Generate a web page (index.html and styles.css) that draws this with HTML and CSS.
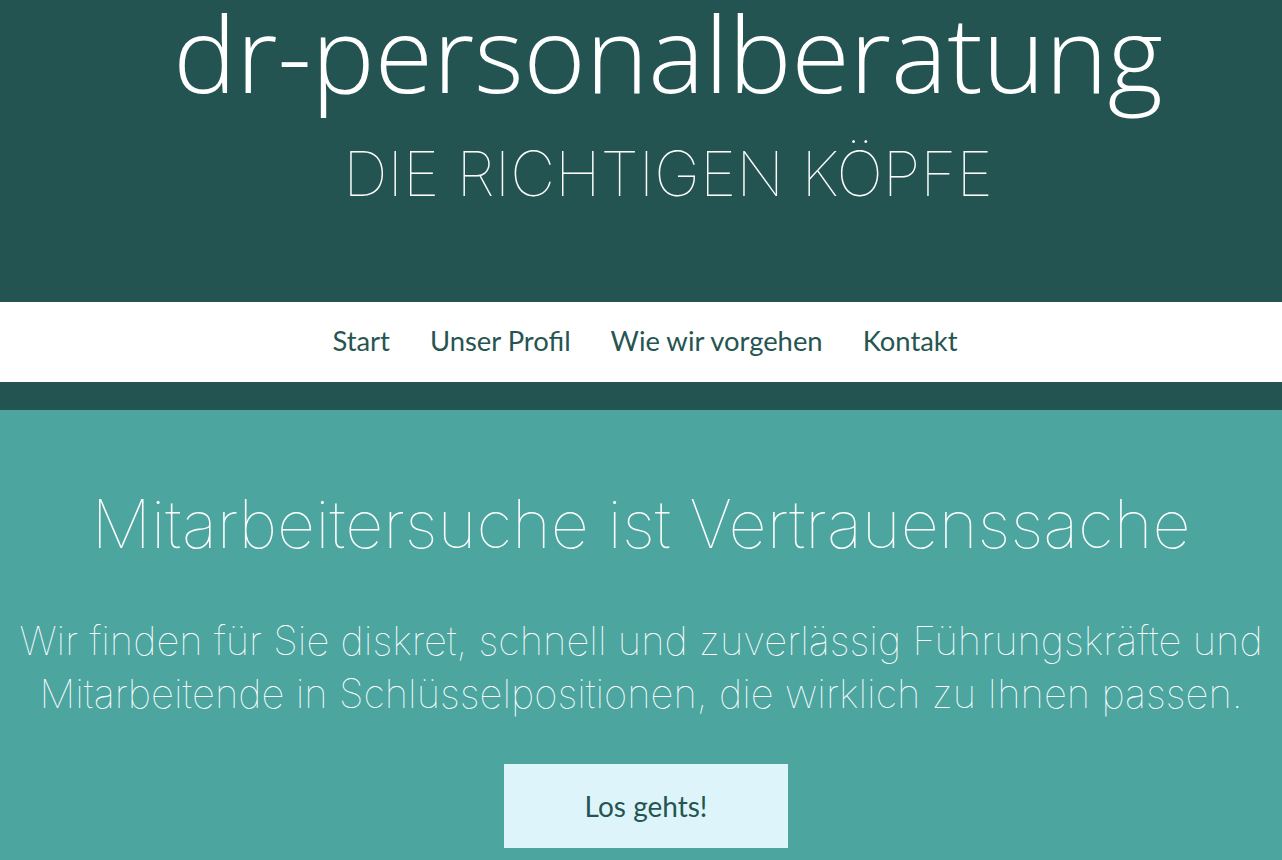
FILE: index.html
```html
<!DOCTYPE html>
<html lang="de">
<head>
<meta charset="utf-8">
<title>dr-personalberatung</title>
<link rel="stylesheet" href="styles.css">
</head>
<body>
<header class="masthead">
  <h1 class="brand">dr-personalberatung</h1>
  <p class="tagline">DIE RICHTIGEN KÖPFE</p>
</header>
<nav class="nav">
  <a href="#">Start</a>
  <a href="#">Unser Profil</a>
  <a href="#">Wie wir vorgehen</a>
  <a href="#">Kontakt</a>
</nav>
<div class="strip"></div>
<section class="hero">
  <h2 class="hero-title">Mitarbeitersuche ist Vertrauenssache</h2>
  <p class="hero-text">Wir finden für Sie diskret, schnell und zuverlässig Führungskräfte und Mitarbeitende in Schlüsselpositionen, die wirklich zu Ihnen passen.</p>
  <a class="cta" href="#">Los gehts!</a>
</section>
</body>
</html>
```
FILE: styles.css
```css
html, body {
  margin: 0;
  padding: 0;
}
body {
  font-family: "Inter", "Open Sans", sans-serif;
  background: #4ca59f;
  overflow: hidden;
  height: 860px;
}
.masthead {
  background: #235451;
  height: 302px;
  display: flex;
  flex-direction: column;
  align-items: center;
  color: #fff;
  padding-left: 54px;
  box-sizing: border-box;
}
.brand {
  margin: 0;
  font-family: "Open Sans", sans-serif;
  font-weight: 300;
  font-size: 106px;
  line-height: 104px;
  letter-spacing: 0;
}
.tagline {
  margin: 32px 0 0 0;
  font-family: "Inter", sans-serif;
  font-weight: 100;
  font-size: 62px;
  line-height: 76px;
}
.nav {
  background: #fff;
  height: 80px;
  display: flex;
  justify-content: center;
  align-items: center;
  gap: 40px;
  padding-left: 8px;
  padding-bottom: 4px;
  box-sizing: border-box;
}
.nav a {
  color: #265551;
  text-decoration: none;
  font-family: "Lato", sans-serif;
  font-size: 27.4px;
  font-weight: 400;
}
.strip {
  background: #235451;
  height: 28px;
}
.hero {
  display: flex;
  flex-direction: column;
  align-items: center;
  text-align: center;
  color: #fff;
  padding-top: 74px;
}
.hero-title {
  margin: 0;
  font-family: "Inter", sans-serif;
  font-weight: 100;
  font-size: 66.5px;
  line-height: 80px;
}
.hero-text {
  margin: 50px 0 0 0;
  font-family: "Inter", sans-serif;
  font-weight: 100;
  font-size: 40px;
  line-height: 53px;
  padding: 0 8px;
}
.cta {
  margin-top: 44px;
  margin-left: 10px;
  width: 284px;
  height: 84px;
  background: #ddf5fa;
  color: #265551;
  text-decoration: none;
  display: flex;
  align-items: center;
  justify-content: center;
  font-family: "Lato", sans-serif;
  font-size: 28px;
  font-weight: 400;
  box-sizing: border-box;
}
```
